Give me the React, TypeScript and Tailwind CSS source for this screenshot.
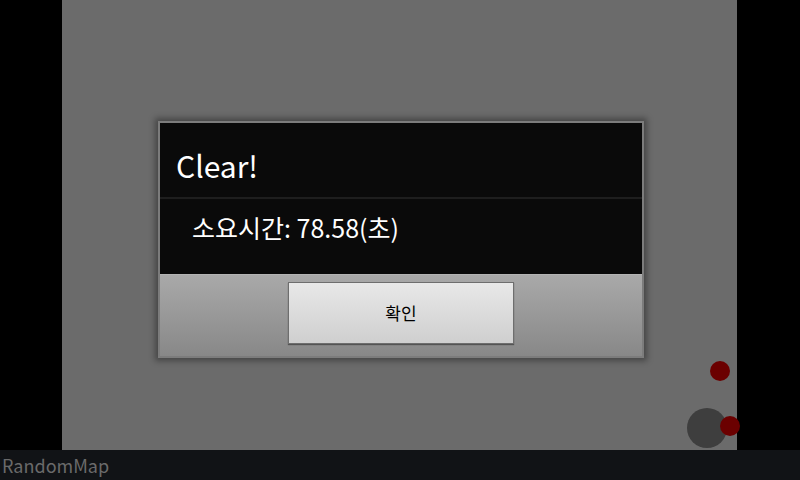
import React from "react";

const font = { fontFamily: '"Noto Sans CJK KR", "Noto Sans", sans-serif' };

export default function App() {
  return (
    <div className="w-[800px] h-[480px] flex flex-col bg-black" style={font}>
      {/* Game area */}
      <div className="relative flex h-[450px]">
        <div className="w-[62px] bg-black" />
        <div className="w-[675px] bg-[#6b6b6b] pl-[96px] pt-[121px]">
          {/* Dialog */}
          <div className="w-[486px] h-[237px] flex flex-col border-2 border-[#7c7c7c] bg-[#0a0a0a] shadow-[0_0_6px_3px_rgba(0,0,0,0.35)]">
            <div className="h-[76px] flex items-center pl-[16px] pt-[10px] border-b-2 border-[#1e1e1e]">
              <span className="text-[30px] leading-none text-white">Clear!</span>
            </div>
            <div className="h-[75px] flex items-start pl-[32px] pt-[16px]">
              <span className="text-[25px] leading-none text-white">소요시간: 78.58(초)</span>
            </div>
            <div className="flex-1 flex justify-center pt-[7px] bg-gradient-to-b from-[#a9a9a9] to-[#888888] border-t border-[#b4b4b4]">
              <button className="w-[226px] h-[62px] flex items-center justify-center border border-[#6e6e6e] bg-gradient-to-b from-[#e8e8e8] to-[#cfcfcf] shadow-[0_1px_1px_rgba(0,0,0,0.4)] text-[17px] text-black">
                확인
              </button>
            </div>
          </div>
        </div>
        <div className="flex-1 bg-black" />

        {/* Game objects */}
        <div className="absolute left-[710px] top-[361px] w-[20px] h-[20px] rounded-full bg-[#6b0000]" />
        <div className="absolute left-[687px] top-[408px] w-[40px] h-[40px] rounded-full bg-[#3e3e3e]" />
        <div className="absolute left-[720px] top-[416px] w-[20px] h-[20px] rounded-full bg-[#6b0000]" />
      </div>

      {/* Title bar */}
      <div className="h-[30px] bg-[#111316] flex items-center pl-[2px]">
        <span className="text-[18px] leading-none text-[#6a6a6a]">RandomMap</span>
      </div>
    </div>
  );
}
